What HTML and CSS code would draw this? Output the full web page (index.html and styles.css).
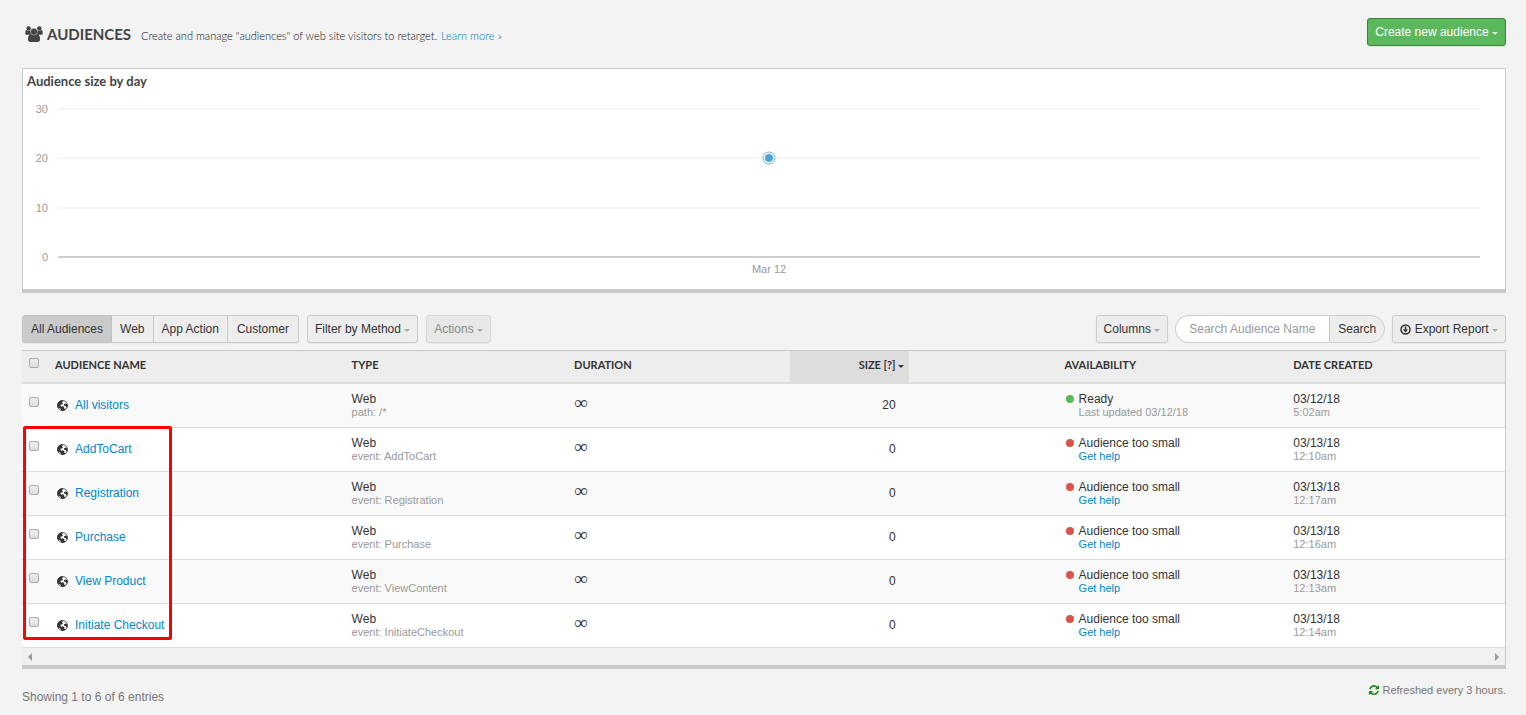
FILE: index.html
```html
<!DOCTYPE html>
<html lang="en">
<head>
<meta charset="utf-8">
<title>Audiences</title>
<link rel="stylesheet" href="styles.css">
</head>
<body>
<svg class="defs" aria-hidden="true">
  <symbol id="globe" viewBox="0 0 22 22">
    <circle cx="11" cy="11" r="10" fill="#fafafa" stroke="#333" stroke-width="1.600"/>
    <path fill="#333" d="M11 .6C5 .6.6 5.500.6 11c0 1.500.4 3 1 4.300l3.400.7 3 2.600 1 2.600c3 .6 6-.3 8.200-2.200l-2.700-2.200-.3-3-2.700-1.200-3.500 1-1.500-2 1.500-2.600 3-.4.500-2.200-1.800-2 2-1.600zM14 8.500l3-1.500 3 1 1.400 3-.6 4-2.300-.5-1-2.500-3.500-1z"/>
  </symbol>
</svg>
<header class="page-head">
  <svg class="users-icon" viewBox="0 0 54 48" aria-hidden="true">
    <g fill="#444">
      <circle cx="11" cy="7" r="6.6"/><circle cx="43" cy="7" r="6.6"/>
      <path d="M1 25V19q0-7 4-7 7 4 12 1-2 7 3 12l-6 1H4q-3 0-3-1zM53 25V19q0-7-4-7-7 4-12 1 2 7-3 12l6 1h10q3 0 3-1z"/>
      <path d="M18 24q9 7 18 0 9 1 9 16 0 8-7 8H16q-7 0-7-8 0-15 9-16z"/>
      <circle cx="27" cy="17" r="10" stroke="#f3f3f3" stroke-width="1"/>
    </g>
  </svg>
  <h1>AUDIENCES</h1>
  <p>Create and manage "audiences" of web site visitors to retarget. <a href="#">Learn more »</a></p>
  <button type="button" class="btn primary">Create new audience <i class="caret"></i></button>
</header>

<section class="panel">
  <h2>Audience size by day</h2>
  <div class="plot">
    <svg class="chart" role="img" aria-label="Audience size by day">
      <g class="grid"><line x1="0" x2="100%" y1="21" y2="21"/><line x1="0" x2="100%" y1="70" y2="70"/><line x1="0" x2="100%" y1="120" y2="120"/></g>
      <line class="axis" x1="0" x2="100%" y1="169" y2="169"/>
      <g class="ylab"><text x="-10" y="25">30</text><text x="-10" y="74">20</text><text x="-10" y="124">10</text><text x="-10" y="173">0</text></g>
      <text class="xlab" x="50%" y="185">Mar 12</text>
      <circle class="ring" cx="50%" cy="70" r="6"/><circle class="dot" cx="50%" cy="70" r="4"/>
    </svg>
  </div>
</section>

<div class="toolbar">
  <div class="group">
    <button type="button" class="btn active">All Audiences</button><button type="button" class="btn">Web</button><button type="button" class="btn">App Action</button><button type="button" class="btn">Customer</button>
  </div>
  <button type="button" class="btn">Filter by Method <i class="caret"></i></button>
  <button type="button" class="btn" disabled>Actions <i class="caret"></i></button>
  <button type="button" class="btn push">Columns <i class="caret"></i></button>
  <form class="search">
    <input type="text" placeholder="Search Audience Name" aria-label="Search Audience Name"><button type="button">Search</button>
  </form>
  <button type="button" class="btn"><svg class="export-icon" viewBox="0 0 22 22" aria-hidden="true"><circle cx="11" cy="11" r="9" fill="none" stroke="#333" stroke-width="3"/><path fill="#333" d="M9.300 5h3.400v6h3.600L11 16.800 5.700 11h3.600z"/></svg> Export Report <i class="caret"></i></button>
</div>

<section class="listing">
  <table>
    <colgroup><col class="c-check"><col class="c-name"><col class="c-type"><col class="c-dur"><col class="c-size"><col class="c-avail"><col></colgroup>
    <thead>
      <tr><th class="check"><input type="checkbox" aria-label="Select all"></th><th>AUDIENCE NAME</th><th>TYPE</th><th>DURATION</th><th class="size sorted">SIZE [?]<i class="caret"></i></th><th class="avail">AVAILABILITY</th><th>DATE CREATED</th></tr>
    </thead>
    <tbody>
      <tr><td class="check"><input type="checkbox" aria-label="All visitors"></td><td class="name"><svg class="globe"><use href="#globe"/></svg><a href="#">All visitors</a></td><td>Web<small>path: /*</small></td><td class="dur">∞</td><td class="size">20</td><td class="avail ready">Ready<small>Last updated 03/12/18</small></td><td>03/12/18<small>5:02am</small></td></tr>
      <tr><td class="check"><input type="checkbox" aria-label="AddToCart"></td><td class="name"><svg class="globe"><use href="#globe"/></svg><a href="#">AddToCart</a></td><td>Web<small>event: AddToCart</small></td><td class="dur">∞</td><td class="size">0</td><td class="avail">Audience too small<small><a href="#">Get help</a></small></td><td>03/13/18<small>12:10am</small></td></tr>
      <tr><td class="check"><input type="checkbox" aria-label="Registration"></td><td class="name"><svg class="globe"><use href="#globe"/></svg><a href="#">Registration</a></td><td>Web<small>event: Registration</small></td><td class="dur">∞</td><td class="size">0</td><td class="avail">Audience too small<small><a href="#">Get help</a></small></td><td>03/13/18<small>12:17am</small></td></tr>
      <tr><td class="check"><input type="checkbox" aria-label="Purchase"></td><td class="name"><svg class="globe"><use href="#globe"/></svg><a href="#">Purchase</a></td><td>Web<small>event: Purchase</small></td><td class="dur">∞</td><td class="size">0</td><td class="avail">Audience too small<small><a href="#">Get help</a></small></td><td>03/13/18<small>12:16am</small></td></tr>
      <tr><td class="check"><input type="checkbox" aria-label="View Product"></td><td class="name"><svg class="globe"><use href="#globe"/></svg><a href="#">View Product</a></td><td>Web<small>event: ViewContent</small></td><td class="dur">∞</td><td class="size">0</td><td class="avail">Audience too small<small><a href="#">Get help</a></small></td><td>03/13/18<small>12:13am</small></td></tr>
      <tr><td class="check"><input type="checkbox" aria-label="Initiate Checkout"></td><td class="name"><svg class="globe"><use href="#globe"/></svg><a href="#">Initiate Checkout</a></td><td>Web<small>event: InitiateCheckout</small></td><td class="dur">∞</td><td class="size">0</td><td class="avail">Audience too small<small><a href="#">Get help</a></small></td><td>03/13/18<small>12:14am</small></td></tr>
    </tbody>
  </table>
  <div class="highlight"></div>
  <div class="scroll">
    <svg viewBox="0 0 4 8" aria-hidden="true"><path d="M4 0v8L0 4z"/></svg>
    <svg viewBox="0 0 4 8" aria-hidden="true"><path d="M0 0v8l4-4z"/></svg>
  </div>
</section>

<footer>
  <span>Showing 1 to 6 of 6 entries</span>
  <span class="refreshed"><svg viewBox="0 0 1536 1664" aria-hidden="true"><path fill="#1c8a1c" d="M1511 928q0 5-1 7-64 268-268 434.500t-478 166.500q-146 0-282.500-55t-243.500-157l-129 129q-19 19-45 19t-45-19-19-45v-448q0-26 19-45t45-19h448q26 0 45 19t19 45-19 45l-137 137q71 66 161 102t187 36q134 0 250-65t186-179q11-17 53-117 8-23 30-23h192q13 0 22.500 9.500t9.500 22.500zM1536 128v448q0 26-19 45t-45 19h-448q-26 0-45-19t-19-45 19-45l138-138q-148-137-349-137-134 0-250 65t-186 179q-11 17-53 117-8 23-30 23h-199q-13 0-22.500-9.500t-9.500-22.500v-7q65-268 270-434.500t480-166.500q146 0 284 55.500t245 156.500l130-129q19-19 45-19t45 19 19 45z"/></svg>Refreshed every 3 hours.</span>
</footer>
</body>
</html>
```
FILE: styles.css
```css
* { box-sizing: border-box; }
body {
  margin: 0;
  padding: 18px 20px 8px 22px;
  background: #f3f3f3;
  color: #333;
  font: 12px/14px "Liberation Sans", Arial, sans-serif;
}
a { color: #0088cc; text-decoration: none; }
button, input { font: inherit; color: inherit; margin: 0; }
.defs { display: none; }

.page-head { display: flex; align-items: center; height: 28px; margin-bottom: 22px; padding-left: 3px; color: #444; }
.users-icon { width: 18px; height: 16px; margin-right: 4px; margin-top: 4px; }
h1 { margin: 4px 10px 0 0; font: bold 15px/18px Lato, sans-serif; }
.page-head p { margin: 8px 0 0; font: 300 11px/14px Lato, sans-serif; color: #111; }
.page-head p a { margin-left: 1px; color: #0077bb; }

.btn {
  height: 28px;
  padding: 0 7px;
  border: 1px solid #ccc;
  border-radius: 3px;
  background: #ededed;
  white-space: nowrap;
  box-shadow: 0 1px 2px rgba(0, 0, 0, .06);
}
.btn:disabled { color: #8a8a8a; background: #e8e8e8; border-color: #d8d8d8; }
.caret {
  display: inline-block;
  width: 0;
  height: 0;
  border: solid transparent;
  border-width: 3px 3px 0;
  border-top-color: #aaa;
  vertical-align: 1px;
}
.primary { margin-left: auto; background: #5cb85c; border-color: #398439; color: #fff; }
.primary .caret { border-top-color: #d4efd4; }

.panel { background: #fff; border: 1px solid #c9c9c9; border-bottom-width: 4px; padding-top: 5px; margin-bottom: 22px; }
h2 { margin: 0 4px; font: bold 13px/14px Lato, sans-serif; color: #444; }
.plot { padding: 0 25px 0 35px; }
.chart { display: block; width: 100%; height: 201px; overflow: visible; font-size: 11px; }
.grid line { stroke: #f6f6f6; stroke-width: 2px; }
.axis { stroke: #ccc; stroke-width: 2px; }
.chart text { fill: #999; }
.ylab text { text-anchor: end; }
.xlab { text-anchor: middle; }
.ring { fill: #fff; stroke: #6bb5e0; }
.dot { fill: #4ba6dd; }

.toolbar { display: flex; gap: 8px; margin-bottom: 7px; }
.push { margin-left: auto; }
.group { display: flex; }
.group .btn { padding: 0 8px; border-radius: 0; border-left-width: 0; }
.group .btn:first-child { border-radius: 3px 0 0 3px; border-left-width: 1px; }
.group .btn:last-child { border-radius: 0 3px 3px 0; padding: 0 9px; }
.group .active { background: #cacaca; border-color: #c4c4c4; }
.search { display: flex; margin-left: -1px; margin-right: -1px; }
.search input { width: 154px; height: 28px; padding: 0 13px; border: 1px solid #ccc; border-right: 0; border-radius: 14px 0 0 14px; background: #fff; }
.search input::placeholder { color: #999; }
.search button { height: 28px; padding: 0 8px; border: 1px solid #ccc; border-radius: 0 14px 14px 0; background: #ededed; }
.export-icon { width: 11px; height: 11px; vertical-align: -2px; }

.listing { position: relative; background: #fff; border: solid #c9c9c9; border-width: 1px 1px 4px 0; margin-bottom: 21px; }
table { width: 100%; border-collapse: separate; border-spacing: 0; table-layout: fixed; }
.c-check { width: 25px; }
.c-name { width: 20%; }
.c-type { width: 15%; }
.c-dur { width: 15.1%; }
.c-size { width: 8%; }
.c-avail { width: 25.4%; }
th { height: 33px; padding: 7px 8px 0; background: #ededed; border-bottom: 2px solid #ddd; font: bold 11px/14px Lato, sans-serif; text-align: left; vertical-align: top; }
td { height: 44px; padding: 8px 8px 0; border-bottom: 1px solid #ddd; vertical-align: top; background: #fff; }
tbody tr:nth-child(odd) td { background: #f9f9f9; }
small { display: block; font-size: 11px; line-height: 13px; color: #999; }
.check { padding: 7px 0 0 7px; }
td.check { padding-top: 13px; }
.check input { display: block; appearance: none; width: 10px; height: 10px; border: 1px solid #aaa; border-radius: 2px; background: linear-gradient(#eee, #ddd); }
td.name { padding-top: 14px; }
.globe { width: 11px; height: 11px; margin: 0 7px 0 2px; vertical-align: -2px; }
td.dur { padding-top: 12px; font: 19px/14px "Liberation Serif", serif; }
th.size, td.size { padding-right: 13px; text-align: right; }
td.size { padding-top: 14px; }
th.sorted { padding-right: 5px; background: #ddd; }
.sorted .caret { border-top-color: #333; margin-left: 2px; }
th.avail { padding-left: 156px; }
td.avail { padding-left: 170px; }
td.avail::before { content: ""; float: left; width: 8px; height: 8px; margin: 3px 0 0 -13px; border-radius: 50%; background: #d9534f; }
td.ready::before { background: #5cb85c; }
.highlight { position: absolute; left: 1px; top: 75px; width: 149px; height: 214px; border: 3px solid #f00; border-radius: 2px; }
.scroll { display: flex; justify-content: space-between; align-items: center; height: 17px; padding: 0 6px; background: #f0f0f0; }
.scroll svg { width: 4px; height: 8px; fill: #999; }

footer { display: flex; justify-content: space-between; align-items: flex-start; color: #777; }
.refreshed { font-size: 11px; margin-top: -7px; }
.refreshed svg { width: 10px; height: 11px; margin-right: 3px; vertical-align: -2px; }
```
